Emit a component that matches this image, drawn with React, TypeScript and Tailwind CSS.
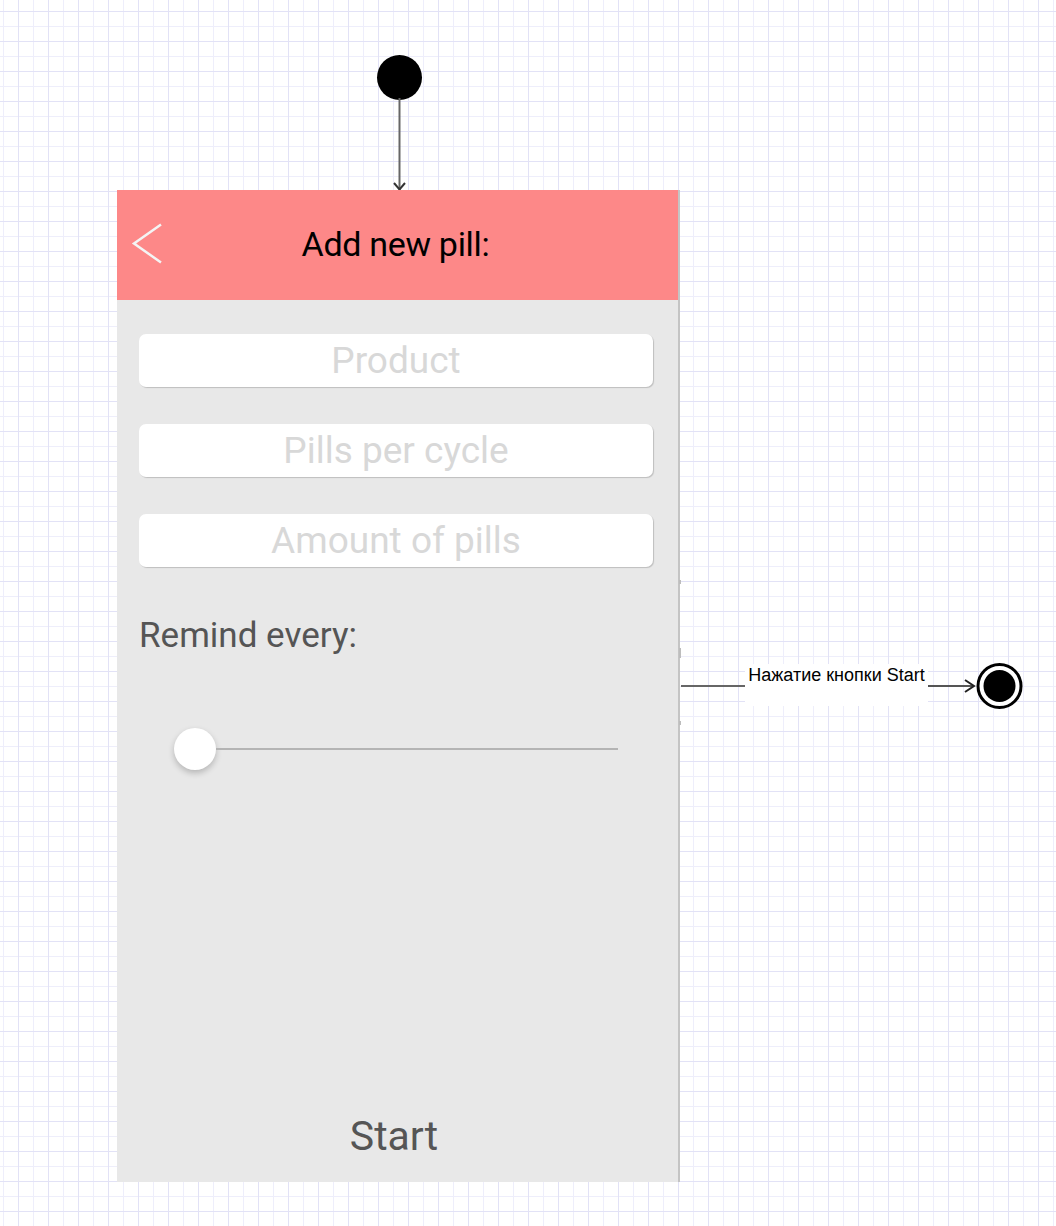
import React from "react";

const fields = ["Product", "Pills per cycle", "Amount of pills"];

function StartNode() {
  return (
    <>
      <div className="absolute left-[377px] top-[55px] w-[45px] h-[45px] rounded-full bg-black" />
      <svg className="absolute left-[390px] top-[98px]" width="20" height="94" viewBox="0 0 20 94">
        <line x1="9.5" y1="0" x2="9.5" y2="92" stroke="#666" strokeWidth="2" />
        <polyline points="4,85 9.5,91.5 15,85" fill="none" stroke="#333" strokeWidth="2" />
      </svg>
    </>
  );
}

function EndTransition() {
  return (
    <>
      {/* little marks on phone edge */}
      <div className="absolute left-[679px] top-[580px] w-[2px] h-[4px] bg-[#bdbdbd]" />
      <div className="absolute left-[679px] top-[648px] w-[2px] h-[10px] bg-[#bdbdbd]" />
      <div className="absolute left-[679px] top-[721px] w-[2px] h-[4px] bg-[#bdbdbd]" />
      <svg className="absolute left-[680px] top-[660px]" width="350" height="52" viewBox="0 0 350 52">
        <line x1="1" y1="26" x2="65" y2="26" stroke="#666" strokeWidth="2" />
        <line x1="248" y1="26" x2="294" y2="26" stroke="#555" strokeWidth="2" />
        <polyline points="285,20 294,26 285,32" fill="none" stroke="#222" strokeWidth="2" />
        <circle cx="319.5" cy="26" r="21.5" fill="#fff" stroke="#000" strokeWidth="3" />
        <circle cx="319.5" cy="26" r="16" fill="#000" />
      </svg>
      <div className="absolute left-[745px] top-[664px] w-[183px] h-[42px] bg-white text-center font-['Liberation_Sans',Arial,sans-serif] text-[18px] leading-[22px] text-black">
        Нажатие кнопки Start
      </div>
    </>
  );
}

function PhoneScreen() {
  return (
    <div className="absolute left-[117px] top-[190px] w-[563px] h-[992px] flex flex-col border-r-2 border-[#c4c4c4] font-['Roboto',sans-serif]">
      <div className="relative h-[110px] bg-[#fd8888] flex items-center justify-center">
        <svg className="absolute left-[14px] top-[33px]" width="34" height="42" viewBox="0 0 34 42">
          <polyline points="30,1.5 3,20.5 30,39.5" fill="none" stroke="#f4f4f4" strokeWidth="2.5" />
        </svg>
        <span className="text-[34px] text-black tracking-[-0.3px] -ml-[4px] -mt-[2px]">Add new pill:</span>
      </div>
      <div className="flex-1 bg-[#e8e8e8] flex flex-col pt-[34px] pl-[22px] pr-[25px]">
        <div className="flex flex-col gap-[37px]">
          {fields.map((f) => (
            <div
              key={f}
              className="h-[53px] w-[514px] rounded-[7px] bg-white shadow-[1px_1px_1px_rgba(0,0,0,0.18)] flex items-center justify-center text-[37px] text-[#d8d8d8]"
            >
              {f}
            </div>
          ))}
        </div>
        <div className="mt-[48px] text-[35px] leading-[41px] text-[#555]">Remind every:</div>
        <div className="mt-[72px] ml-[35px] flex items-center">
          <div className="w-[42px] h-[42px] rounded-full bg-white shadow-[0_3px_6px_rgba(0,0,0,0.22)]" />
          <div className="w-[402px] h-[2px] bg-[#b4b4b4]" />
        </div>
        <div className="mt-auto pb-[22px] text-center text-[41px] leading-[48px] text-[#555] -ml-[4px]">Start</div>
      </div>
    </div>
  );
}

export default function App() {
  return (
    <div className="relative w-[1056px] h-[1226px] overflow-hidden bg-white bg-[linear-gradient(to_right,#e2e2f6_1px,transparent_1px),linear-gradient(to_bottom,#e2e2f6_1px,transparent_1px),linear-gradient(to_right,#eeeefb_1px,transparent_1px),linear-gradient(to_bottom,#eeeefb_1px,transparent_1px)] bg-[size:30px_30px,30px_30px,15px_15px,15px_15px] bg-[position:18px_11px]">
      <StartNode />
      <PhoneScreen />
      <EndTransition />
    </div>
  );
}
